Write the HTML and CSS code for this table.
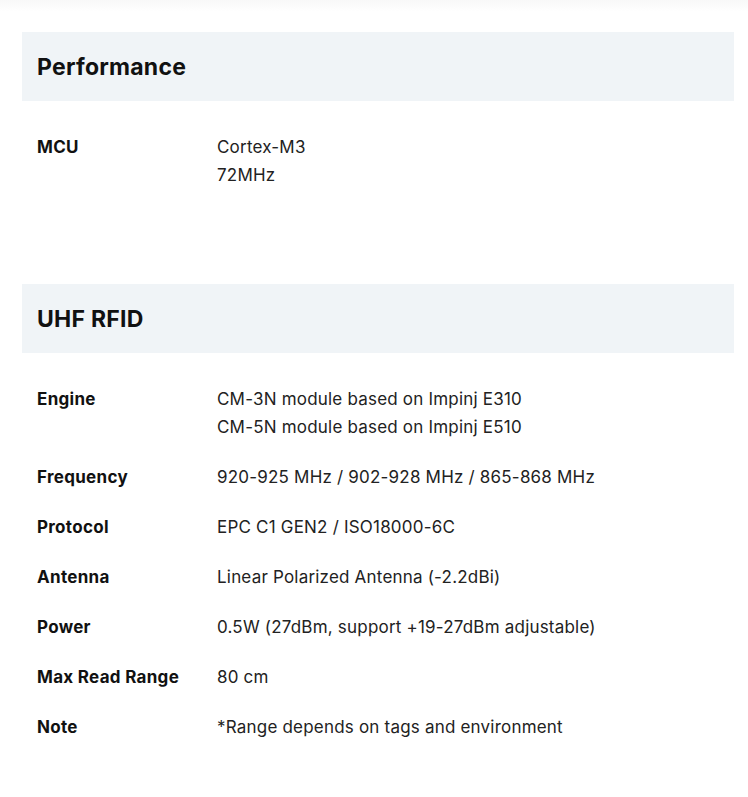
FILE: index.html
```html
<!DOCTYPE html>
<html lang="en">
<head>
<meta charset="utf-8">
<title>Specs</title>
<link rel="stylesheet" href="styles.css">
</head>
<body>
<div class="topfade"></div>
<main class="specs">
  <section class="group">
    <h2 class="group-title">Performance</h2>
    <dl class="rows">
      <div class="row">
        <dt class="label">MCU</dt>
        <dd class="value">Cortex-M3<br>72MHz</dd>
      </div>
    </dl>
  </section>
  <section class="group">
    <h2 class="group-title">UHF RFID</h2>
    <dl class="rows">
      <div class="row">
        <dt class="label">Engine</dt>
        <dd class="value">CM-3N module based on Impinj E310<br>CM-5N module based on Impinj E510</dd>
      </div>
      <div class="row">
        <dt class="label">Frequency</dt>
        <dd class="value">920-925 MHz / 902-928 MHz / 865-868 MHz</dd>
      </div>
      <div class="row">
        <dt class="label">Protocol</dt>
        <dd class="value">EPC C1 GEN2 / ISO18000-6C</dd>
      </div>
      <div class="row">
        <dt class="label">Antenna</dt>
        <dd class="value">Linear Polarized Antenna (-2.2dBi)</dd>
      </div>
      <div class="row">
        <dt class="label">Power</dt>
        <dd class="value">0.5W (27dBm, support +19-27dBm adjustable)</dd>
      </div>
      <div class="row">
        <dt class="label">Max Read Range</dt>
        <dd class="value">80 cm</dd>
      </div>
      <div class="row">
        <dt class="label">Note</dt>
        <dd class="value">*Range depends on tags and environment</dd>
      </div>
    </dl>
  </section>
</main>
</body>
</html>
```
FILE: styles.css
```css
* { box-sizing: border-box; }
html, body { margin: 0; padding: 0; background: #fff; }
body {
  font-family: "Inter", "Liberation Sans", sans-serif;
  color: #1a1a1a;
}
.topfade {
  height: 12px;
  background: linear-gradient(#f8f8f8, #fff);
}
.specs {
  padding: 20px 14px 0 22px;
  display: flex;
  flex-direction: column;
  gap: 84px;
}
.group-title {
  margin: 0;
  background: #f0f4f7;
  height: 69px;
  padding: 0 15px;
  display: flex;
  align-items: center;
  font-size: 23px;
  font-weight: 700;
  letter-spacing: 0.25px;
  color: #111;
}
.rows {
  margin: 21px 0 0;
  padding: 0 15px;
}
.row {
  display: flex;
  padding: 11px 0;
  line-height: 28px;
  font-size: 17px;
}
.label {
  width: 180px;
  flex: none;
  font-weight: 700;
  letter-spacing: 0.3px;
  color: #111;
  margin: 0;
}
.value {
  margin: 0;
  letter-spacing: 0.2px;
  color: #222;
}
```
